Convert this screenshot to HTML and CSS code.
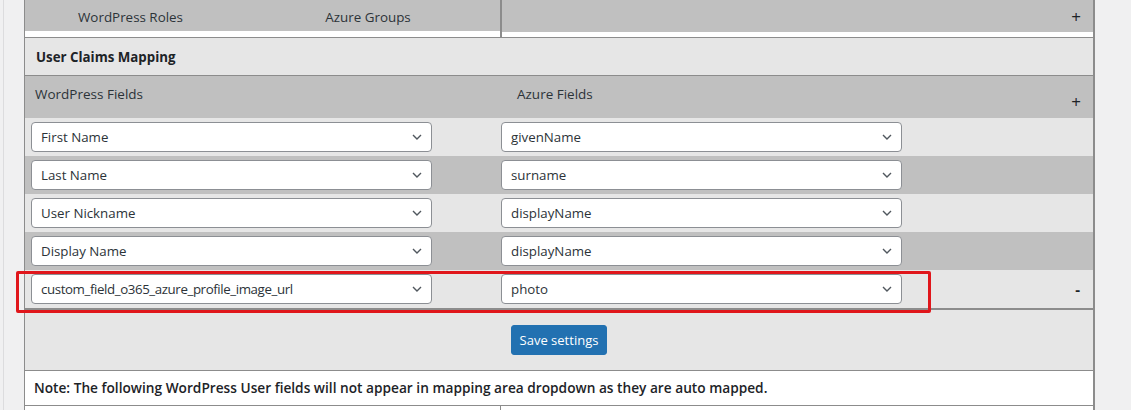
FILE: index.html
```html
<!DOCTYPE html>
<html lang="en">
<head>
  <meta charset="UTF-8">
  <title>User Claims Mapping</title>
  <link rel="stylesheet" href="styles.css">
</head>
<body>
  <div class="page">
    <div class="panel">

      <!-- Role mapping header (cut off at the top) -->
      <div class="roles-row">
        <div class="roles-left">
          <span class="roles-wp">WordPress Roles</span>
          <span class="roles-az">Azure Groups</span>
        </div>
        <div class="roles-right">
          <span class="sign">+</span>
        </div>
      </div>

      <div class="section-title">User Claims Mapping</div>

      <div class="map-head">
        <span class="head-wp">WordPress Fields</span>
        <span class="head-az">Azure Fields</span>
        <span class="sign head-sign">+</span>
      </div>

      <div class="map-rows">
        <div class="map-row light">
          <div class="cell-wp"><div class="select"><span>First Name</span><svg class="chev" viewBox="0 0 10 6"><path d="M1 1l4 4 4-4"/></svg></div></div>
          <div class="cell-az"><div class="select"><span>givenName</span><svg class="chev" viewBox="0 0 10 6"><path d="M1 1l4 4 4-4"/></svg></div></div>
          <div class="cell-ctl"></div>
        </div>
        <div class="map-row dark">
          <div class="cell-wp"><div class="select"><span>Last Name</span><svg class="chev" viewBox="0 0 10 6"><path d="M1 1l4 4 4-4"/></svg></div></div>
          <div class="cell-az"><div class="select"><span>surname</span><svg class="chev" viewBox="0 0 10 6"><path d="M1 1l4 4 4-4"/></svg></div></div>
          <div class="cell-ctl"></div>
        </div>
        <div class="map-row light">
          <div class="cell-wp"><div class="select"><span>User Nickname</span><svg class="chev" viewBox="0 0 10 6"><path d="M1 1l4 4 4-4"/></svg></div></div>
          <div class="cell-az"><div class="select"><span>displayName</span><svg class="chev" viewBox="0 0 10 6"><path d="M1 1l4 4 4-4"/></svg></div></div>
          <div class="cell-ctl"></div>
        </div>
        <div class="map-row dark">
          <div class="cell-wp"><div class="select"><span>Display Name</span><svg class="chev" viewBox="0 0 10 6"><path d="M1 1l4 4 4-4"/></svg></div></div>
          <div class="cell-az"><div class="select"><span>displayName</span><svg class="chev" viewBox="0 0 10 6"><path d="M1 1l4 4 4-4"/></svg></div></div>
          <div class="cell-ctl"></div>
        </div>
        <div class="map-row light highlighted">
          <div class="cell-wp"><div class="select"><span class="long">custom_field_o365_azure_profile_image_url</span><svg class="chev" viewBox="0 0 10 6"><path d="M1 1l4 4 4-4"/></svg></div></div>
          <div class="cell-az"><div class="select"><span>photo</span><svg class="chev" viewBox="0 0 10 6"><path d="M1 1l4 4 4-4"/></svg></div></div>
          <div class="cell-ctl"><span class="sign minus">-</span></div>
          <div class="red-box"></div>
        </div>
      </div>

      <div class="save-area">
        <button class="save-btn">Save settings</button>
      </div>

      <div class="note">Note: The following WordPress User fields will not appear in mapping area dropdown as they are auto mapped.</div>

      <div class="next-row">
        <div class="next-left"></div>
        <div class="next-right"></div>
      </div>

    </div>
  </div>
</body>
</html>
```

FILE: styles.css
```css
body {
  margin: 0;
  background: #f0f0f1;
  font-family: "Open Sans", "Noto Sans", sans-serif;
  font-size: 13px;
  color: #2c3338;
  padding-left: 3px;
  height: 410px;
  overflow: hidden;
}

.page {
  border-left: 1px solid #dcdcde;
  padding-left: 20px;
  height: 100%;
}

.panel {
  width: 1068px;
  border-left: 1px solid #8c8c8c;
  border-right: 2px solid #8c8c8c;
  background: #e6e6e6;
}

.sign {
  font-size: 17px;
  color: #1d2327;
  line-height: 1;
}

/* Roles header */
.roles-row {
  display: flex;
  height: 37px;
  background: #fff;
}

.roles-left {
  width: 475px;
  height: 31px;
  background: #c0c0c0;
  border-right: 2px solid #8c8c8c;
  padding-bottom: 6px;
  background-clip: content-box;
  display: flex;
  align-items: flex-start;
}

.roles-left span {
  display: block;
  text-align: center;
  padding-top: 8px;
  font-size: 13.4px;
}

.roles-wp {
  width: 211px;
}

.roles-az {
  width: 264px;
}

.roles-right {
  flex: 1;
  height: 32px;
  background: #c0c0c0;
  display: flex;
  justify-content: flex-end;
  align-items: center;
  padding-right: 12px;
}

/* User Claims Mapping */
.section-title {
  border-top: 1px solid #8c8c8c;
  height: 37px;
  line-height: 38px;
  padding-left: 11px;
  font-weight: 700;
  font-size: 13.3px;
  color: #1d2327;
}

.map-head {
  border-top: 1px solid #8c8c8c;
  height: 42px;
  background: #c0c0c0;
  display: flex;
  font-size: 13.5px;
}

.head-wp {
  width: 482px;
  padding: 9px 0 0 10px;
}

.head-az {
  padding-top: 9px;
  flex: 1;
}

.head-sign {
  padding: 17px 12px 0 0;
}

.map-row {
  display: flex;
  align-items: center;
  height: 38px;
  padding-left: 6px;
  position: relative;
}

.map-row.light {
  background: #e6e6e6;
}

.map-row.dark {
  background: #c0c0c0;
}

.map-rows {
  border-bottom: 2px solid #8c8c8c;
}

.cell-wp {
  width: 470px;
}

.cell-az {
  width: 401px;
}

.cell-ctl {
  flex: 1;
  display: flex;
  justify-content: flex-end;
  padding-right: 13px;
}

.select {
  box-sizing: border-box;
  width: 401px;
  height: 30px;
  background: #fff;
  border: 1px solid #8c8f94;
  border-radius: 4px;
  display: flex;
  align-items: center;
  justify-content: space-between;
  padding: 0 9px 0 9px;
  color: #2c3338;
  font-size: 13.3px;
}

.select .long {
  letter-spacing: -0.4px;
}

.chev {
  width: 10px;
  height: 6px;
  fill: none;
  stroke: #50575e;
  stroke-width: 1.4;
}

.minus {
  font-weight: 700;
  font-size: 15px;
}

.red-box {
  position: absolute;
  left: -9px;
  top: 1px;
  width: 909px;
  height: 36px;
  border: 3px solid #e0161b;
  border-radius: 2px;
  pointer-events: none;
}

/* Save */
.save-area {
  height: 60px;
  display: flex;
  justify-content: center;
  align-items: center;
}

.save-btn {
  background: #2271b1;
  color: #fff;
  border: 1px solid #2271b1;
  border-radius: 3px;
  height: 30px;
  padding: 0 8px;
  font-family: inherit;
  font-size: 13px;
  cursor: pointer;
}

.note {
  background: #fff;
  border-top: 1px solid #8c8c8c;
  height: 34px;
  line-height: 34px;
  padding-left: 9px;
  color: #1d2327;
  font-weight: 600;
  font-size: 13.7px;
}

.next-row {
  display: flex;
  border-top: 1px solid #8c8c8c;
  height: 10px;
  background: #fff;
}

.next-left {
  width: 475px;
  border-right: 1px solid #8c8c8c;
}
```
